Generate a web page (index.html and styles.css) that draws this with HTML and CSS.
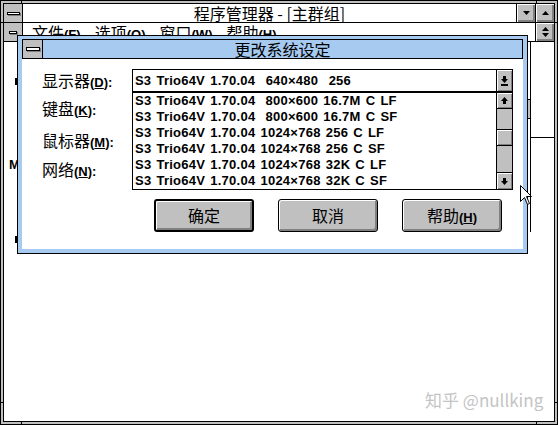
FILE: index.html
```html
<!DOCTYPE html>
<html lang="zh-CN">
<head>
<meta charset="utf-8">
<title>程序管理器</title>
<link rel="stylesheet" href="styles.css">
</head>
<body>
<div class="pm">
  <div class="pm-inner">
    <div class="titlebar">
      <div class="sysbox"><span class="sysbar"></span></div>
      <div class="title">程序管理器 - [主群组]</div>
      <div class="tbtn"><svg width="7" height="4" viewBox="0 0 7 4"><polygon points="0,0 7,0 3.5,4" fill="#000"/></svg></div>
      <div class="tbtn"><svg width="7" height="4" viewBox="0 0 7 4"><polygon points="3.5,0 7,4 0,4" fill="#000"/></svg></div>
    </div>
    <div class="menubar">
      <div class="sysbox"><span class="sysbar small"></span></div>
      <div class="menus">
        <span class="mi">文件<span class="lat">(<u>F</u>)</span></span>
        <span class="mi">选项<span class="lat">(<u>O</u>)</span></span>
        <span class="mi">窗口<span class="lat">(<u>W</u>)</span></span>
        <span class="mi">帮助<span class="lat">(<u>H</u>)</span></span>
      </div>
      <div class="tbtn"><svg width="7" height="10" viewBox="0 0 7 10"><polygon points="3.5,0 7,4 0,4" fill="#000"/><polygon points="0,6 7,6 3.5,10" fill="#000"/></svg></div>
    </div>
    <div class="client"></div>
  </div>
  <span class="tick th tl1"></span>
  <span class="tick th tl2"></span>
  <span class="tick th tr1"></span>
  <span class="tick th tr2"></span>
  <span class="tick tv tt1"></span>
  <span class="tick tv tt2"></span>
  <span class="tick tv tb1"></span>
  <span class="tick tv tb2"></span>
</div>

<div class="bgwin"></div>
<div class="bgthumb"></div>
<div class="bgline-h"></div>
<div class="rem-m lat">M</div>
<div class="rem-tick r1"></div>
<div class="rem-tick r2"></div>

<div class="dialog">
  <div class="dtitle">
    <div class="dsys"><span class="dsysbar"></span></div>
    <div class="dtext">更改系统设定</div>
  </div>
  <div class="dclient">
    <div class="labels">
      <div class="lbl l1">显示器<span class="lat">(<u>D</u>):</span></div>
      <div class="lbl l2">键盘<span class="lat">(<u>K</u>):</span></div>
      <div class="lbl l3">鼠标器<span class="lat">(<u>M</u>):</span></div>
      <div class="lbl l4">网络<span class="lat">(<u>N</u>):</span></div>
    </div>
    <div class="controls">
      <div class="combo">
        <div class="ctext lat">S3 Trio64V 1.70.04  640×480  256</div>
        <div class="cbtn"><svg width="7" height="10" viewBox="0 0 7 10"><rect x="2" y="0" width="3" height="3" fill="#000"/><polygon points="0,3 7,3 3.5,7" fill="#000"/><rect x="0" y="8" width="7" height="2" fill="#000"/></svg></div>
      </div>
      <div class="list">
        <div class="items lat">
          <div class="row">S3 Trio64V 1.70.04  800×600 16.7M C LF</div>
          <div class="row">S3 Trio64V 1.70.04  800×600 16.7M C SF</div>
          <div class="row">S3 Trio64V 1.70.04 1024×768 256 C LF</div>
          <div class="row">S3 Trio64V 1.70.04 1024×768 256 C SF</div>
          <div class="row">S3 Trio64V 1.70.04 1024×768 32K C LF</div>
          <div class="row">S3 Trio64V 1.70.04 1024×768 32K C SF</div>
        </div>
        <div class="vscroll">
          <div class="sbtn up"><svg width="7" height="7" viewBox="0 0 7 7"><polygon points="3.5,0 7,4 0,4" fill="#000"/><rect x="2" y="4" width="3" height="3" fill="#000"/></svg></div>
          <div class="track"><div class="thumb"></div></div>
          <div class="sbtn down"><svg width="7" height="7" viewBox="0 0 7 7"><rect x="2" y="0" width="3" height="3" fill="#000"/><polygon points="0,3 7,3 3.5,7" fill="#000"/></svg></div>
        </div>
      </div>
      <div class="buttons">
        <div class="btn default">确定</div>
        <div class="btn">取消</div>
        <div class="btn">帮助<span class="lat">(<u>H</u>)</span></div>
      </div>
    </div>
  </div>
</div>

<svg class="cursor" width="13" height="21" viewBox="0 0 13 21"><polygon points="0.5,0.5 0.5,16.5 4.5,12.5 7.5,19.5 9.5,18.5 6.5,11.5 11.5,11.5" fill="#fff" stroke="#000" stroke-width="1"/></svg>

<div class="watermark">知乎 @nullking</div>
</body>
</html>
```
FILE: styles.css
```css
* { box-sizing: border-box; }
html, body { margin: 0; padding: 0; }
body {
  width: 558px;
  height: 425px;
  overflow: hidden;
  position: relative;
  background: #fff;
  color: #000;
  font-family: "Noto Sans CJK SC", "Liberation Sans", sans-serif;
  font-size: 16px;
}
.lat {
  font-family: "Liberation Sans", Arial, sans-serif;
  font-weight: bold;
  font-size: 13px;
}
u { text-decoration-thickness: 1px; text-underline-offset: 1px; }

/* Program Manager window */
.pm {
  position: relative;
  width: 558px;
  height: 425px;
  border: 1px solid #000;
  background: #c0c0c0;
  padding: 2px;
}
.pm-inner {
  height: 100%;
  border: 1px solid #000;
  background: #fff;
  display: flex;
  flex-direction: column;
}
.titlebar, .menubar {
  height: 19px;
  border-bottom: 1px solid #000;
  display: flex;
  background: #fff;
}
.sysbox {
  width: 19px;
  border-right: 1px solid #000;
  background: #c0c0c0;
  display: flex;
  align-items: center;
  justify-content: center;
}
.sysbar {
  width: 13px;
  height: 3px;
  border: 1px solid #000;
  background: #fff;
  box-shadow: 1px 1px 0 #808080;
}
.sysbar.small { width: 8px; }
.title {
  flex: 1;
  text-align: center;
  line-height: 18px;
  white-space: nowrap;
}
.tbtn {
  width: 19px;
  border-left: 1px solid #000;
  background: #c0c0c0;
  box-shadow: inset 1px 1px #fff, inset -2px -2px #808080;
  display: flex;
  align-items: center;
  justify-content: center;
}
.menus {
  flex: 1;
  display: flex;
  gap: 14px;
  padding-left: 9px;
  line-height: 18px;
  white-space: nowrap;
}
.client { flex: 1; background: #fff; }

.tick { position: absolute; background: #000; }
.th { width: 4px; height: 1px; }
.tv { width: 1px; height: 4px; }
.tl1 { left: -1px; top: 21px; }
.tl2 { left: -1px; top: 401px; }
.tr1 { right: -1px; top: 21px; }
.tr2 { right: -1px; top: 401px; }
.tt1 { left: 20px; top: -1px; }
.tt2 { left: 535px; top: -1px; }
.tb1 { left: 20px; bottom: -1px; }
.tb2 { left: 535px; bottom: -1px; }

/* remnants of the window behind the dialog */
.bgwin {
  position: absolute;
  left: 12px;
  top: 41px;
  width: 519px;
  height: 191px;
  border-right: 1px solid #000;
}
.bgthumb {
  position: absolute;
  left: 526px;
  top: 99px;
  width: 5px;
  height: 20px;
  background: #c0c0c0;
  border: 1px solid #000;
}
.bgline-h {
  position: absolute;
  left: 530px;
  top: 137px;
  width: 24px;
  height: 1px;
  background: #000;
}
.rem-m {
  position: absolute;
  left: 9px;
  top: 157px;
  line-height: 16px;
}
.rem-tick {
  position: absolute;
  left: 15px;
  width: 2px;
  height: 7px;
  background: #000;
}
.r1 { top: 78px; }
.r2 { top: 236px; }

/* Dialog */
.dialog {
  position: absolute;
  left: 17px;
  top: 35px;
  width: 511px;
  height: 219px;
  border: 1px solid #000;
  background: #a6caf0;
  padding: 3px 4px 4px 4px;
  display: flex;
  flex-direction: column;
}
.dtitle {
  height: 20px;
  border: 1px solid #000;
  display: flex;
  background: #a6caf0;
}
.dsys {
  width: 20px;
  border-right: 1px solid #000;
  background: #c0c0c0;
  display: flex;
  align-items: center;
  justify-content: center;
}
.dsysbar {
  width: 14px;
  height: 4px;
  border: 1px solid #000;
  background: #fff;
  box-shadow: 1px 1px 0 #808080;
}
.dtext {
  flex: 1;
  text-align: center;
  line-height: 18px;
}
.dclient {
  flex: 1;
  background: #fff;
  display: flex;
  padding-top: 10px;
}
.labels {
  width: 110px;
  padding-left: 20px;
  display: flex;
  flex-direction: column;
}
.lbl {
  height: 20px;
  line-height: 20px;
  white-space: nowrap;
}
.l1 { margin-top: 1px; }
.l2 { margin-top: 8px; }
.l3 { margin-top: 12px; }
.l4 { margin-top: 9px; }

.controls {
  width: 381px;
  display: flex;
  flex-direction: column;
}
.combo {
  height: 23px;
  border: 1px solid #000;
  display: flex;
}
.ctext {
  flex: 1;
  padding-left: 2px;
  line-height: 21px;
  white-space: pre;
  word-spacing: 1.5px;
  letter-spacing: 0.2px;
}
.cbtn {
  width: 16px;
  border-left: 1px solid #000;
  background: #c0c0c0;
  box-shadow: inset 1px 1px #fff, inset -1px -1px #808080;
  display: flex;
  align-items: center;
  justify-content: center;
}
.list {
  height: 98px;
  border: 1px solid #000;
  display: flex;
}
.items {
  flex: 1;
  padding-left: 2px;
}
.row {
  height: 16px;
  line-height: 16px;
  white-space: pre;
  word-spacing: 1.2px;
  letter-spacing: 0.25px;
}
.vscroll {
  width: 16px;
  border-left: 1px solid #000;
  background: #c0c0c0;
  display: flex;
  flex-direction: column;
}
.sbtn {
  background: #c0c0c0;
  box-shadow: inset 1px 1px #fff, inset -1px -1px #808080;
  display: flex;
  align-items: center;
  justify-content: center;
}
.sbtn.up { height: 16px; border-bottom: 1px solid #000; }
.sbtn.down { height: 17px; border-top: 1px solid #000; }
.track { flex: 1; }
.thumb {
  margin-top: 20px;
  height: 17px;
  border-top: 1px solid #000;
  border-bottom: 1px solid #000;
  box-shadow: inset 1px 1px #fff, inset -1px -1px #808080;
}
.buttons {
  display: flex;
  gap: 24px;
  margin-top: 9px;
  margin-left: 22px;
}
.btn {
  width: 100px;
  height: 33px;
  border: 1px solid #000;
  border-radius: 3px;
  background: #c0c0c0;
  box-shadow: inset 1px 1px #fff, inset -2px -2px #808080;
  text-align: center;
  line-height: 31px;
  white-space: nowrap;
}
.btn.default {
  border-width: 2px;
  line-height: 29px;
}

.cursor {
  position: absolute;
  left: 520px;
  top: 185px;
}
.watermark {
  position: absolute;
  left: 425px;
  top: 389px;
  font-size: 17px;
  line-height: 22px;
  color: #c4c4c4;
  white-space: nowrap;
}
```
